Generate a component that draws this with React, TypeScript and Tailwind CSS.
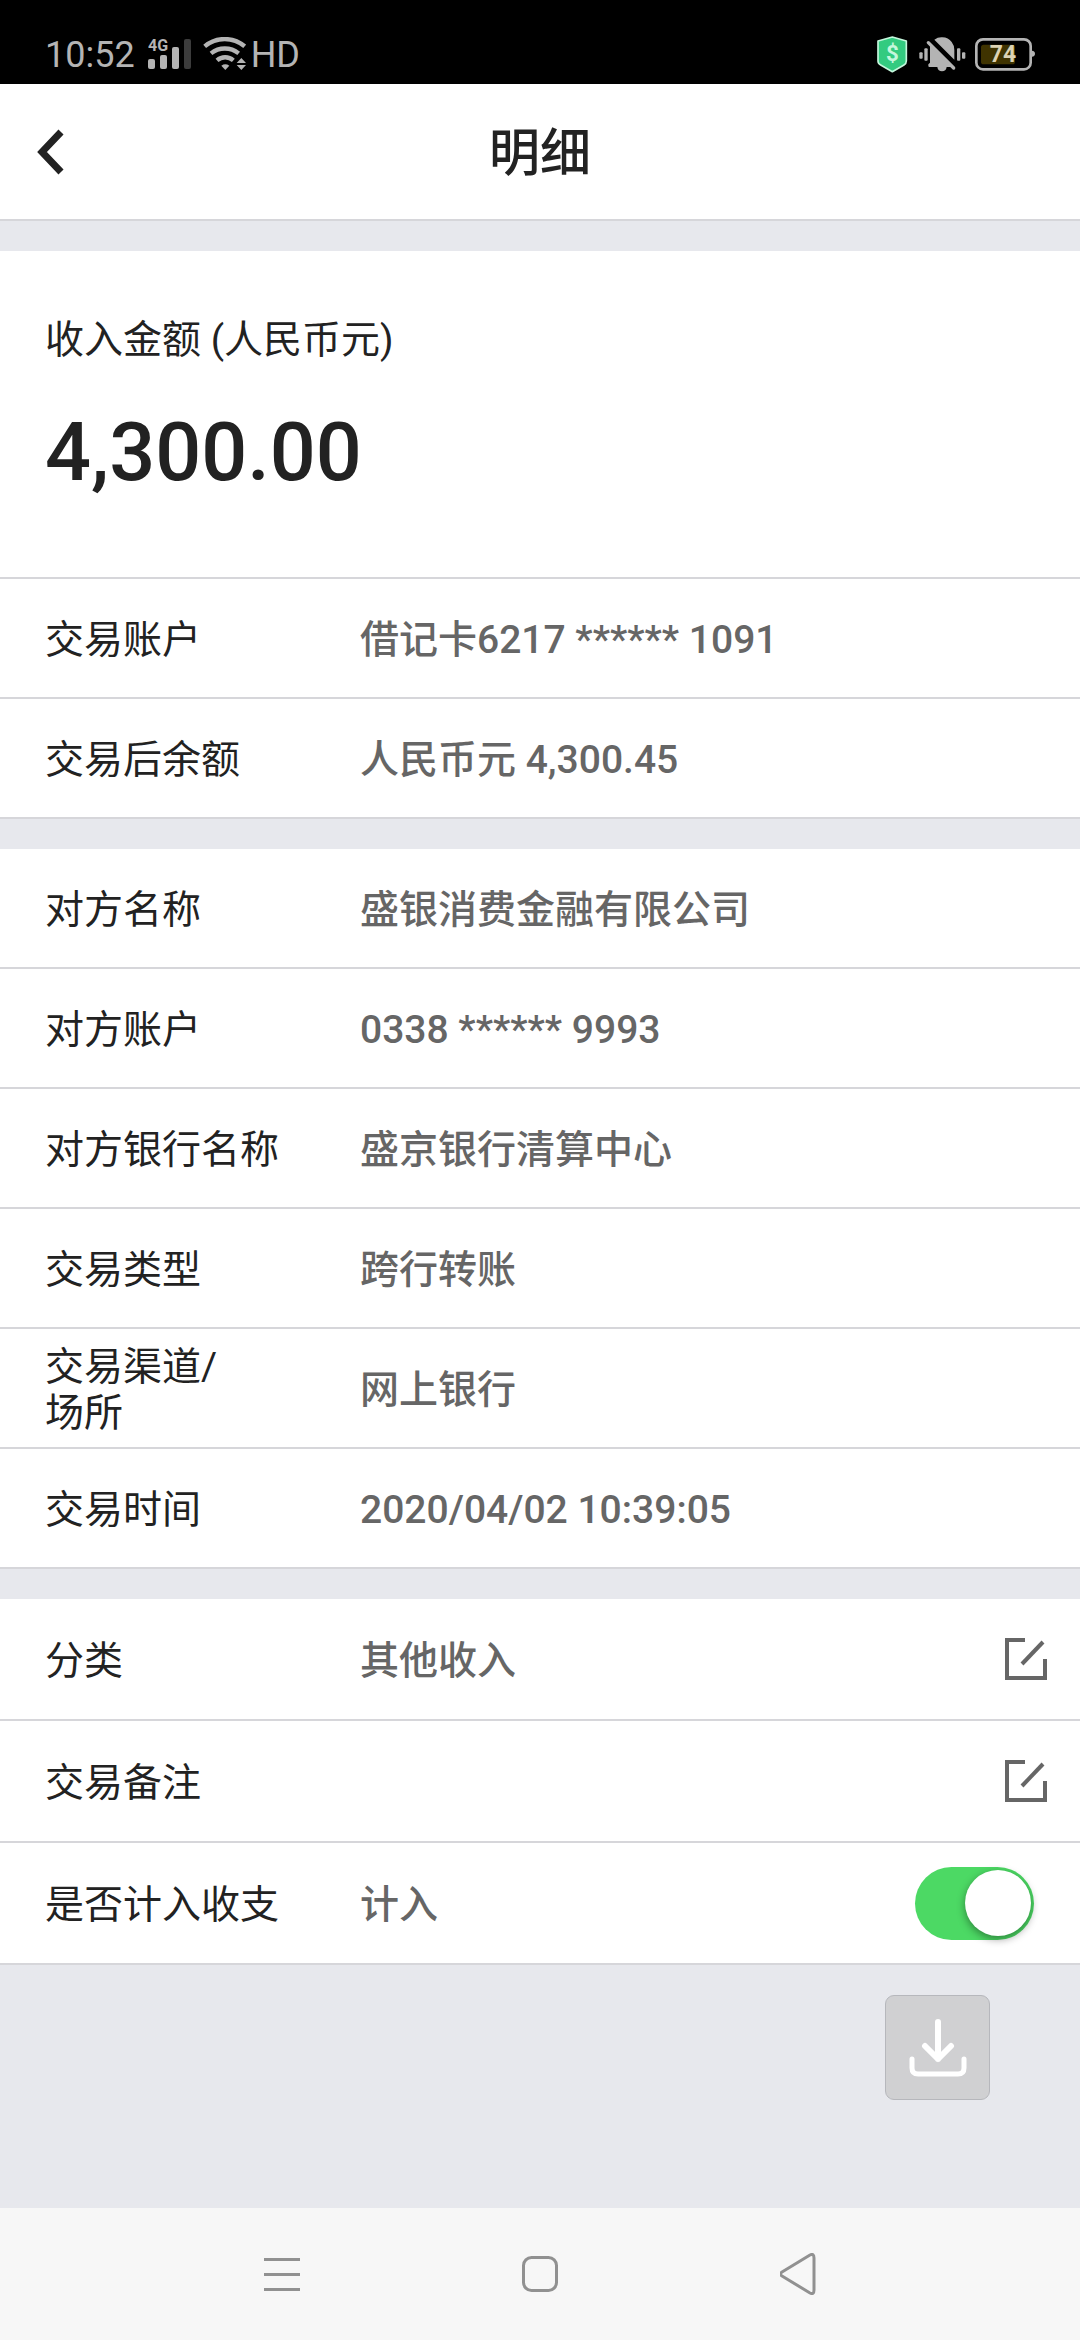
import { useState, type ReactNode } from 'react';

type RowProps = {
  label: ReactNode;
  children?: ReactNode;
  action?: ReactNode;
  tall?: boolean;
};

function Row({ label, children, action, tall }: RowProps) {
  return (
    <div
      className={`flex items-center border-b-2 border-[#d6d6da] pl-[45px] ${tall ? 'min-h-[122px]' : 'min-h-[120px]'}`}
    >
      <dt className="w-[315px] shrink-0 pt-1 text-[#222222]">{label}</dt>
      <dd className="flex flex-1 items-center justify-between font-medium text-[#666666]">
        <span className="pt-1">{children}</span>
        {action}
      </dd>
    </div>
  );
}

function SignalIcon() {
  return (
    <svg className="h-[38px] w-[45px]" viewBox="0 -3 45 38" fill="#b4b4b4">
      <text x="0" y="14" fontSize="16" fontWeight="700">4G</text>
      <rect x="0" y="22" width="7" height="10" rx="2" />
      <rect x="12" y="18" width="7" height="14" rx="2" />
      <rect x="24" y="10" width="7" height="22" rx="2" />
      <rect x="36" y="2" width="7" height="30" rx="2" fill="#3c3c3c" />
    </svg>
  );
}

function WifiIcon() {
  return (
    <svg className="h-[33px] w-[43px]" viewBox="610 114 129 99" fill="none" stroke="#b4b4b4" strokeWidth="13">
      <path d="M615 142A93 93 0 0 1 735 142" />
      <path d="M634 163A67 67 0 0 1 717 163" />
      <path d="M652 184A37 37 0 0 1 701 184" />
      <path d="M665 200Q677 192 689 200L677 213Z" fill="#b4b4b4" stroke="none" />
      <path d="M711 192L725 177L739 192ZM711 198H739L725 213Z" fill="#b4b4b4" stroke="none" />
    </svg>
  );
}

function ShieldIcon() {
  return (
    <svg className="h-[37px] w-[31px]" viewBox="233 107 93 111">
      <path
        d="M279 110L321 122V182Q321 190 314 194L279 214L244 194Q236 190 236 182V122Z"
        fill="#33cb80"
        stroke="#c4f7dc"
        strokeWidth="5"
        strokeLinejoin="round"
      />
      <text x="279" y="183" textAnchor="middle" fontSize="67" fontWeight="700" fill="#c4f7dc">$</text>
    </svg>
  );
}

function MutedBellIcon() {
  return (
    <svg className="h-[35px] w-[47px]" viewBox="359 110 141 105" fill="#b4b4b4">
      <rect x="360" y="156" width="10" height="19" rx="3" />
      <rect x="375" y="144" width="10" height="37" rx="3" />
      <rect x="473" y="144" width="10" height="37" rx="3" />
      <rect x="488" y="156" width="10" height="19" rx="3" />
      <path d="M405 118Q416 110 429 111Q447 111 457 125Q465 135 465 149V178Z" />
      <path d="M397 138L460 200H442Q440 213 428 213Q416 213 414 200H390Q387 200 387 196V192L392 187V134Z" />
      <path d="M387 127L463 203" stroke="#b4b4b4" strokeWidth="10" strokeLinecap="round" />
    </svg>
  );
}

function BatteryIcon() {
  return (
    <svg className="h-[33px] w-[60px]" viewBox="525 113 180 99">
      <rect x="543" y="133" width="102" height="59" rx="8" fill="#3f3300" />
      <rect x="529" y="117" width="163" height="90" rx="20" fill="none" stroke="#b4b4b4" strokeWidth="8" />
      <path d="M696 151Q705 152 705 160Q705 168 696 169Z" fill="#b4b4b4" />
      <text x="609" y="186" textAnchor="middle" fontSize="69" fontWeight="700" fill="#dcd3b4">74</text>
    </svg>
  );
}

function EditButton({ name }: { name: string }) {
  return (
    <button type="button" aria-label={name} className="mr-[33px]">
      <svg className="size-[42px]" viewBox="0 0 42 42" fill="none" stroke="#666666" strokeWidth="4">
        <path d="M20 2H2V40H40V21" />
        <path d="M17 26L38 4" />
      </svg>
    </button>
  );
}

export default function App() {
  const [counted, setCounted] = useState(true);

  return (
    <div className="flex min-h-screen flex-col bg-[#e7e8ed] font-[Roboto,'Noto_Sans_CJK_SC',sans-serif] text-[39px] leading-[46px]">
      <div className="flex h-[84px] items-end justify-between bg-black pr-[45px] pb-[11px] pl-[45px] text-[36px] leading-[36px] text-[#b4b4b4]">
        <div className="flex items-center">
          <span className="pt-1">10:52</span>
          <div className="ml-[13px] flex items-center gap-[10px]">
            <SignalIcon />
            <WifiIcon />
          </div>
          <span className="ml-[5px] pt-1">HD</span>
        </div>
        <div className="flex items-center">
          <ShieldIcon />
          <div className="ml-[11px] flex items-center gap-[9px]">
            <MutedBellIcon />
            <BatteryIcon />
          </div>
        </div>
      </div>

      <header className="grid h-[137px] grid-cols-[1fr_auto_1fr] items-center border-b-2 border-[#d6d6da] bg-white">
        <button type="button" aria-label="返回" className="ml-[36px] justify-self-start">
          <svg className="h-[46px] w-[28px]" viewBox="0 0 28 46" fill="none" stroke="#222222" strokeWidth="7">
            <path d="M25 3L6 23L25 43" />
          </svg>
        </button>
        <h1 className="pt-1 text-[51px] leading-[60px] font-medium text-[#222222]">明细</h1>
      </header>

      <main className="mt-[30px] flex-1">
        <section className="bg-white">
          <div className="border-b-2 border-[#d6d6da] px-[45px] pt-[66px] pb-[76px] text-[#222222]">
            <p>收入金额 (人民币元)</p>
            <p className="mt-[42px] text-[81px] leading-[96px] font-medium">4,300.00</p>
          </div>
          <dl>
            <Row label="交易账户">借记卡6217 ****** 1091</Row>
            <Row label="交易后余额">人民币元 4,300.45</Row>
          </dl>
        </section>

        <dl className="mt-[30px] bg-white">
          <Row label="对方名称">盛银消费金融有限公司</Row>
          <Row label="对方账户">0338 ****** 9993</Row>
          <Row label="对方银行名称">盛京银行清算中心</Row>
          <Row label="交易类型">跨行转账</Row>
          <Row label={<>交易渠道/<br />场所</>}>网上银行</Row>
          <Row label="交易时间">2020/04/02 10:39:05</Row>
        </dl>

        <dl className="mt-[30px] bg-white">
          <Row label="分类" tall action={<EditButton name="修改分类" />}>其他收入</Row>
          <Row label="交易备注" tall action={<EditButton name="修改交易备注" />} />
          <Row
            label={<label htmlFor="counted">是否计入收支</label>}
            tall
            action={
              <input
                id="counted"
                type="checkbox"
                role="switch"
                checked={counted}
                onChange={(e) => setCounted(e.target.checked)}
                className="mr-[46px] flex h-[73px] w-[119px] appearance-none items-center rounded-full bg-[#d6d6da] px-[3px] before:size-[66px] before:rounded-full before:bg-white before:shadow-[0_3px_9px_rgba(0,0,0,0.4)] checked:justify-end checked:bg-[#4cd964]"
              />
            }
          >
            {counted ? '计入' : '不计入'}
          </Row>
        </dl>

        <div className="flex justify-end pt-[30px] pr-[90px]">
          <button
            type="button"
            aria-label="下载"
            className="flex size-[105px] items-center justify-center rounded-[9px] border border-[#b6b7bc] bg-[#d0d0d2]"
          >
            <svg
              className="size-[60px]"
              viewBox="0 0 60 60"
              fill="none"
              stroke="white"
              strokeWidth="6"
              strokeLinecap="round"
              strokeLinejoin="round"
            >
              <path d="M30 4V41M17 28L30 41L43 28" />
              <path d="M4 41V50Q4 56 10 56H50Q56 56 56 50V41" strokeWidth="5" />
            </svg>
          </button>
        </div>
      </main>

      <nav className="flex h-[132px] items-center justify-center gap-[222px] bg-[#f7f7f7]">
        <button type="button" aria-label="最近任务">
          <svg className="size-[36px]" viewBox="0 0 36 36" stroke="#919191" strokeWidth="3">
            <path d="M0 3.5H36M0 18.5H36M0 33.5H36" />
          </svg>
        </button>
        <button type="button" aria-label="主屏幕">
          <svg className="size-[36px]" viewBox="0 0 36 36" fill="none" stroke="#919191" strokeWidth="3">
            <rect x="1.5" y="1.5" width="33" height="33" rx="8" />
          </svg>
        </button>
        <button type="button" aria-label="返回上一级">
          <svg className="h-[42px] w-[36px]" viewBox="0 0 36 42" fill="none" stroke="#919191" strokeWidth="3" strokeLinejoin="round">
            <path d="M30 2Q34 0 34 5V37Q34 42 30 40L2 23Q-1 21 2 19Z" />
          </svg>
        </button>
      </nav>
    </div>
  );
}
